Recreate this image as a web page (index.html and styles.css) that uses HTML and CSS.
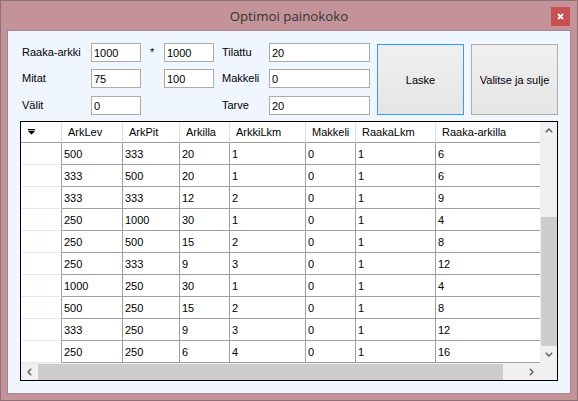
FILE: index.html
```html
<!DOCTYPE html>
<html lang="fi">
<head>
  <meta charset="UTF-8" />
  <title>Optimoi painokoko</title>
  <link rel="stylesheet" href="styles.css">
</head>
<body>
  <div class="window">
    <div class="titlebar">
      <span></span>
      <div class="title">Optimoi painokoko</div>
      <div class="close">
        <svg width="7" height="7" viewBox="0 0 7 7"><path d="M1 1 L6 6 M6 1 L1 6" stroke="#fff" stroke-width="1.8"/></svg>
      </div>
    </div>

    <div class="client">
      <form class="form" onsubmit="return false">
        <label class="lbl">Raaka-arkki</label>
        <input class="tb" type="text" value="1000" />
        <span class="star">*</span>
        <input class="tb" type="text" value="1000" />
        <label class="lbl lbl-2">Tilattu</label>
        <input class="tb" type="text" value="20" />
        <button type="button" class="btn btn-focus">Laske</button>
        <button type="button" class="btn btn-2">Valitse ja sulje</button>

        <label class="lbl">Mitat</label>
        <input class="tb" type="text" value="75" />
        <span></span>
        <input class="tb" type="text" value="100" />
        <label class="lbl lbl-2">Makkeli</label>
        <input class="tb" type="text" value="0" />

        <label class="lbl">Välit</label>
        <input class="tb" type="text" value="0" />
        <span></span>
        <span></span>
        <label class="lbl lbl-2">Tarve</label>
        <input class="tb" type="text" value="20" />
      </form>

      <div class="grid">
        <div class="grid-main">
          <div class="grid-view">
            <div class="row head">
              <div class="cell corner-cell">
                <svg width="7" height="6" viewBox="0 0 7 6"><rect x="0" y="0" width="7" height="1.3" fill="#000"/><path d="M0 2 L7 2 L3.5 5.8 Z" fill="#000"/></svg>
              </div>
              <div class="cell">ArkLev</div>
              <div class="cell">ArkPit</div>
              <div class="cell">Arkilla</div>
              <div class="cell">ArkkiLkm</div>
              <div class="cell">Makkeli</div>
              <div class="cell">RaakaLkm</div>
              <div class="cell last">Raaka-arkilla</div>
            </div>
            <div id="rows"></div>
          </div>
          <div class="vscroll">
            <div class="sb-btn">
              <svg width="8" height="5" viewBox="0 0 8 5"><path d="M0.8 4.2 L4 1 L7.2 4.2" fill="none" stroke="#606060" stroke-width="1.5"/></svg>
            </div>
            <div class="v-track"></div>
            <div class="v-thumb"></div>
            <div class="sb-btn">
              <svg width="8" height="5" viewBox="0 0 8 5"><path d="M0.8 0.8 L4 4 L7.2 0.8" fill="none" stroke="#606060" stroke-width="1.5"/></svg>
            </div>
          </div>
        </div>
        <div class="hscroll">
          <div class="sb-btn">
            <svg width="5" height="8" viewBox="0 0 5 8"><path d="M4.2 0.8 L1 4 L4.2 7.2" fill="none" stroke="#606060" stroke-width="1.5"/></svg>
          </div>
          <div class="h-thumb"></div>
          <div class="h-track"></div>
          <div class="sb-btn">
            <svg width="5" height="8" viewBox="0 0 5 8"><path d="M0.8 0.8 L4 4 L0.8 7.2" fill="none" stroke="#606060" stroke-width="1.5"/></svg>
          </div>
          <div class="sb-corner"></div>
        </div>
      </div>
    </div>
  </div>

  <script>
    const tulokset = [
      [500, 333, 20, 1, 0, 1, 6],
      [333, 500, 20, 1, 0, 1, 6],
      [333, 333, 12, 2, 0, 1, 9],
      [250, 1000, 30, 1, 0, 1, 4],
      [250, 500, 15, 2, 0, 1, 8],
      [250, 333, 9, 3, 0, 1, 12],
      [1000, 250, 30, 1, 0, 1, 4],
      [500, 250, 15, 2, 0, 1, 8],
      [333, 250, 9, 3, 0, 1, 12],
      [250, 250, 6, 4, 0, 1, 16]
    ];

    const rows = document.getElementById("rows");

    tulokset.forEach(r => {
      const row = document.createElement("div");
      row.className = "row";
      row.innerHTML = `<div class="cell row-head"></div>` +
        r.map((v, i) => `<div class="cell${i === r.length - 1 ? " last" : ""}">${v}</div>`).join("");
      rows.appendChild(row);
    });
  </script>
</body>
</html>
```

FILE: styles.css
```css
:root {
  --frame: #c4939a;
  --client: #eff6fe;
  --line: #a0a0a0;
  --sb: #f0f0f0;
  --thumb: #cdcdcd;
}

body {
  margin: 0;
  font-family: "Liberation Sans", Arial, sans-serif;
  font-size: 11px;
  color: #000;
}

.window {
  width: 578px;
  height: 401px;
  box-sizing: border-box;
  border: 1px solid #8f7077;
  background: var(--frame);
  padding: 0 6px 6px;
}

.titlebar {
  height: 29px;
  display: grid;
  grid-template-columns: 1fr auto 1fr;
  align-items: center;
}

.title {
  font-family: "Open Sans", sans-serif;
  font-size: 13.3px;
  color: #333;
  padding-top: 1px;
}

.close {
  justify-self: end;
  margin-right: 1px;
  margin-top: 1px;
  width: 19px;
  height: 19px;
  background: #c75050;
  display: flex;
  align-items: center;
  justify-content: center;
}

.client {
  height: 364px;
  box-sizing: border-box;
  border: 1px solid #a3868b;
  background: var(--client);
  padding: 12px;
}

.form {
  margin: 0;
  display: grid;
  grid-template-columns: 71px 50px 23px 50px 55px 101px 94px 94px;
  grid-template-rows: 26px 27px 19px;
  align-items: start;
}

.lbl {
  height: 19px;
  line-height: 19px;
  padding-left: 2px;
}

.lbl-2 {
  padding-left: 8px;
}

.star {
  padding-left: 9px;
  line-height: 19px;
  height: 19px;
}

.tb {
  width: 50px;
  height: 19px;
  box-sizing: border-box;
  margin: 0;
  border: 1px solid #ababab;
  background: #fff;
  padding: 0 2px;
  font-family: inherit;
  font-size: 11px;
  color: #000;
  outline: none;
}

.form .tb:nth-of-type(3),
.form .tb:nth-of-type(6),
.form .tb:nth-of-type(8) {
  width: 101px;
}

.btn {
  grid-column: 7;
  grid-row: 1 / 4;
  margin: 1px 0 0 7px;
  width: 87px;
  height: 71px;
  box-sizing: border-box;
  border: 1px solid #adadad;
  background: linear-gradient(#f0f0f0, #e5e5e5);
  font-family: inherit;
  font-size: 11px;
  color: #000;
  padding: 0;
}

.btn-2 {
  grid-column: 8;
}

.btn-focus {
  border-color: #3399ff;
}

.grid {
  margin-top: 6px;
  height: 260px;
  box-sizing: border-box;
  border: 1px solid #000;
  background: #fff;
  display: flex;
  flex-direction: column;
}

.grid-main {
  height: 241px;
  display: flex;
}

.grid-view {
  width: 519px;
  overflow: hidden;
}

.row {
  display: grid;
  grid-template-columns: 41px 61px 57px 50px 76px 50px 80px 104px;
  height: 22px;
}

.row.head {
  height: 21px;
}

.cell {
  box-sizing: border-box;
  border-right: 1px solid var(--line);
  border-bottom: 1px solid var(--line);
  padding-left: 2px;
  display: flex;
  align-items: center;
  white-space: nowrap;
  overflow: hidden;
}

.cell.last {
  border-right: none;
}

.head .cell {
  padding-left: 6px;
  border-right-color: #e3e3e3;
}

.head .corner-cell {
  padding-left: 7px;
  padding-bottom: 1px;
}

.row-head {
  border-bottom-color: #e1eaf4;
}

.vscroll {
  width: 17px;
  background: var(--sb);
  display: flex;
  flex-direction: column;
}

.sb-btn {
  width: 17px;
  height: 17px;
  flex: none;
  background: var(--sb);
  display: flex;
  align-items: center;
  justify-content: center;
}

.v-track {
  height: 78px;
}

.v-thumb {
  flex: 1;
  margin: 0 0 0 1px;
  background: var(--thumb);
}

.hscroll {
  height: 17px;
  display: flex;
  background: var(--sb);
}

.h-thumb {
  width: 465px;
  background: var(--thumb);
  margin: 1px 0 0;
}

.h-track {
  width: 20px;
}

.sb-corner {
  width: 17px;
  background: var(--sb);
}
```
